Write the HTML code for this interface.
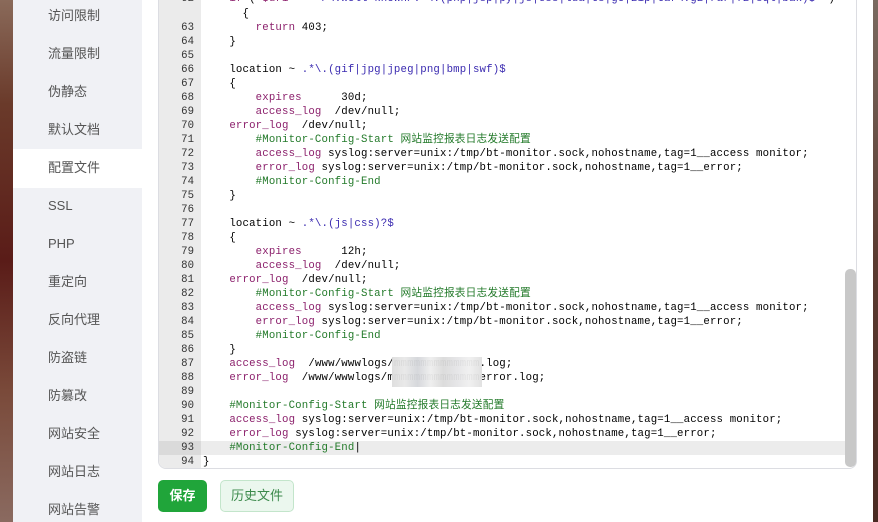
<!DOCTYPE html>
<html><head><meta charset="utf-8"><style>
*{margin:0;padding:0;box-sizing:border-box}
body{width:878px;height:522px;overflow:hidden;background:#fff;font-family:"Liberation Sans","Noto Sans CJK SC",sans-serif;position:relative}
.bgl{position:absolute;left:0;top:0;width:13px;height:522px;background:linear-gradient(#8a6a5a 0,#6a3a2a 20%,#5a1c18 50%,#7a4a3a 75%,#8a6a60 100%)}
.bgr{position:absolute;left:873px;top:0;width:5px;height:522px;background:linear-gradient(#7a6a60,#5a3a30 50%,#4a2a22)}
.side{position:absolute;left:13px;top:0;width:129px;height:522px;background:#f0f1f5}
.side div{position:absolute;left:35px;font-size:13px;color:#555;height:20px;line-height:20px}
.act{position:absolute;left:13px;top:149px;width:129px;height:39px;background:#fff}
.ed{position:absolute;left:158px;top:-10px;width:699px;height:479px;border:1px solid #dcdde2;border-radius:0 0 8px 8px;overflow:hidden;background:#fff}
.gut{position:absolute;left:0;top:0;width:42px;height:100%;background:#ebebeb}
.code{position:absolute;left:0;top:0;width:100%;font-family:"Liberation Mono","Noto Sans CJK SC",monospace;font-size:10.7px;letter-spacing:.17px;line-height:14px;color:#000}
.l{position:absolute;left:0;height:14px;white-space:pre;width:100%}
.n{position:absolute;left:0;width:35px;text-align:right;color:#333;letter-spacing:0}
.t{position:absolute;left:44px}
.k{color:#8b1f6b}.c{color:#237a2a}.r{color:#3a2ab0}
.sb{position:absolute;left:845px;top:269px;width:11px;height:198px;background:#c8c8c8;border-radius:5px}
.blur{position:absolute;left:392px;top:357px;width:90px;height:30px;background:linear-gradient(90deg,#ddd,#e8e8e8,#d4d6da,#eee,#dadada,#e4e4e6,#f0f0f0,#e0e0e0);opacity:.95}
.b1{position:absolute;left:158px;top:480px;width:49px;height:32px;background:#20a53a;color:#fff;border-radius:5px;font-size:13px;text-align:center;line-height:32px;font-weight:bold}
.b2{position:absolute;left:220px;top:480px;width:74px;height:32px;background:#ebf7ee;color:#3c8a4c;border:1px solid #c3e5cb;border-radius:5px;font-size:13px;text-align:center;line-height:30px}
</style></head><body>
<div class="bgl"></div><div class="side"></div><div class="act"></div>
<div class="side" style="background:none">
<div style="top:6px">访问限制</div><div style="top:44px">流量限制</div><div style="top:82px">伪静态</div><div style="top:120px">默认文档</div><div style="top:158px">配置文件</div><div style="top:196px">SSL</div><div style="top:234px">PHP</div><div style="top:272px">重定向</div><div style="top:310px">反向代理</div><div style="top:348px">防盗链</div><div style="top:386px">防篡改</div><div style="top:424px">网站安全</div><div style="top:462px">网站日志</div><div style="top:500px">网站告警</div>
</div>
<div class="ed"><div class="gut"></div>
<div class="l" style="top:450px;left:42px;background:#ececec;width:700px"></div>
<div class="l" style="top:450px;width:42px;background:#dadada"></div>
<div class="code">
<div class="l" style="top:1px"><span class="n">62</span><span class="t">    <span class="k">if</span> ( <span class="k">$uri</span> ~ <span class="r">"^/\.well-known/.*\.(php|jsp|py|js|css|lua|ts|go|zip|tar\.gz|rar|7z|sql|bak)$"</span> )</span></div>
<div class="l" style="top:16px"><span class="t">      {</span></div>
<div class="l" style="top:30px"><span class="n">63</span><span class="t">        <span class="k">return</span> 403;</span></div>
<div class="l" style="top:44px"><span class="n">64</span><span class="t">    }</span></div>
<div class="l" style="top:58px"><span class="n">65</span></div>
<div class="l" style="top:72px"><span class="n">66</span><span class="t">    location ~ <span class="r">.*\.(gif|jpg|jpeg|png|bmp|swf)$</span></span></div>
<div class="l" style="top:86px"><span class="n">67</span><span class="t">    {</span></div>
<div class="l" style="top:100px"><span class="n">68</span><span class="t">        <span class="k">expires</span>      30d;</span></div>
<div class="l" style="top:114px"><span class="n">69</span><span class="t">        <span class="k">access_log</span>  /dev/null;</span></div>
<div class="l" style="top:128px"><span class="n">70</span><span class="t">    <span class="k">error_log</span>  /dev/null;</span></div>
<div class="l" style="top:142px"><span class="n">71</span><span class="t">        <span class="c">#Monitor-Config-Start 网站监控报表日志发送配置</span></span></div>
<div class="l" style="top:156px"><span class="n">72</span><span class="t">        <span class="k">access_log</span> syslog:server=unix:/tmp/bt-monitor.sock,nohostname,tag=1__access monitor;</span></div>
<div class="l" style="top:170px"><span class="n">73</span><span class="t">        <span class="k">error_log</span> syslog:server=unix:/tmp/bt-monitor.sock,nohostname,tag=1__error;</span></div>
<div class="l" style="top:184px"><span class="n">74</span><span class="t">        <span class="c">#Monitor-Config-End</span></span></div>
<div class="l" style="top:198px"><span class="n">75</span><span class="t">    }</span></div>
<div class="l" style="top:212px"><span class="n">76</span></div>
<div class="l" style="top:226px"><span class="n">77</span><span class="t">    location ~ <span class="r">.*\.(js|css)?$</span></span></div>
<div class="l" style="top:240px"><span class="n">78</span><span class="t">    {</span></div>
<div class="l" style="top:254px"><span class="n">79</span><span class="t">        <span class="k">expires</span>      12h;</span></div>
<div class="l" style="top:268px"><span class="n">80</span><span class="t">        <span class="k">access_log</span>  /dev/null;</span></div>
<div class="l" style="top:282px"><span class="n">81</span><span class="t">    <span class="k">error_log</span>  /dev/null;</span></div>
<div class="l" style="top:296px"><span class="n">82</span><span class="t">        <span class="c">#Monitor-Config-Start 网站监控报表日志发送配置</span></span></div>
<div class="l" style="top:310px"><span class="n">83</span><span class="t">        <span class="k">access_log</span> syslog:server=unix:/tmp/bt-monitor.sock,nohostname,tag=1__access monitor;</span></div>
<div class="l" style="top:324px"><span class="n">84</span><span class="t">        <span class="k">error_log</span> syslog:server=unix:/tmp/bt-monitor.sock,nohostname,tag=1__error;</span></div>
<div class="l" style="top:338px"><span class="n">85</span><span class="t">        <span class="c">#Monitor-Config-End</span></span></div>
<div class="l" style="top:352px"><span class="n">86</span><span class="t">    }</span></div>
<div class="l" style="top:366px"><span class="n">87</span><span class="t">    <span class="k">access_log</span>  /www/wwwlogs/mmmmmmmmmmmmm.log;</span></div>
<div class="l" style="top:380px"><span class="n">88</span><span class="t">    <span class="k">error_log</span>  /www/wwwlogs/mmmmmmmmmmmmmmerror.log;</span></div>
<div class="l" style="top:394px"><span class="n">89</span></div>
<div class="l" style="top:408px"><span class="n">90</span><span class="t">    <span class="c">#Monitor-Config-Start 网站监控报表日志发送配置</span></span></div>
<div class="l" style="top:422px"><span class="n">91</span><span class="t">    <span class="k">access_log</span> syslog:server=unix:/tmp/bt-monitor.sock,nohostname,tag=1__access monitor;</span></div>
<div class="l" style="top:436px"><span class="n">92</span><span class="t">    <span class="k">error_log</span> syslog:server=unix:/tmp/bt-monitor.sock,nohostname,tag=1__error;</span></div>
<div class="l" style="top:450px"><span class="n">93</span><span class="t">    <span class="c">#Monitor-Config-End</span>|</span></div>
<div class="l" style="top:464px"><span class="n">94</span><span class="t">}</span></div>
</div></div>
<div class="blur"></div>
<div class="sb"></div>
<div class="bgr"></div>
<div class="b1">保存</div><div class="b2">历史文件</div>
</body></html>
